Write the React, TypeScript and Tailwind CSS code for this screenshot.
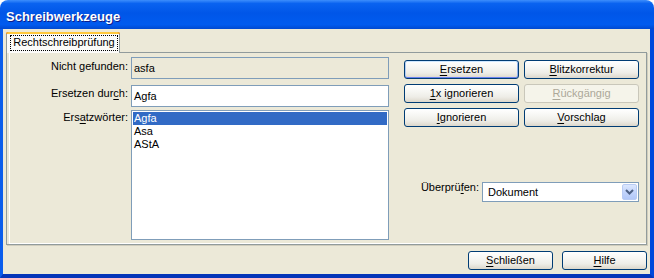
import React from "react";

const U = ({ children }: { children: React.ReactNode }) => (
  <span className="underline decoration-1 underline-offset-[2px]">{children}</span>
);

function Btn({
  children,
  w,
  def,
  disabled,
}: {
  children: React.ReactNode;
  w: string;
  def?: boolean;
  disabled?: boolean;
}) {
  const base =
    "h-[19px] flex items-center justify-center rounded-[3px] border leading-[13px] ";
  const look = disabled
    ? "border-[#C9C7BA] text-[#ACA899] bg-[#F5F4EA]"
    : "border-[#003C74] text-black bg-[linear-gradient(180deg,#FFFFFF_0%,#F7F7F4_35%,#EEEDE7_70%,#DCD7CB_100%)]";
  const d = def
    ? " shadow-[inset_0_1px_0_#CEE7FF,inset_0_-1px_0_#6982EE,inset_1px_0_0_#B4CDF3,inset_-1px_0_0_#8DAFEA]"
    : "";
  return <div className={base + look + d + " " + w}>{children}</div>;
}

export default function App() {
  return (
    <div className="w-[654px] h-[278px] bg-white font-['Liberation_Sans',Arial,sans-serif] text-[11px] leading-[13px] text-black">
      <div className="w-full h-full flex flex-col rounded-t-[8px] overflow-hidden">
        {/* Title bar */}
        <div className="h-[29px] shrink-0 pl-[6px] pt-[9px] bg-[linear-gradient(180deg,#3D8EFC_0%,#0A63F0_12%,#0056E8_45%,#005BEF_85%,#0049D0_100%)]">
          <span className="text-white font-bold text-[13px] leading-[15px] [text-shadow:1px_1px_0_#0F1E8A]">
            Schreibwerkzeuge
          </span>
        </div>

        {/* Client */}
        <div className="flex-1 flex flex-col bg-[#ECE9D8] border-l-[3px] border-r-[4px] border-b-[4px] border-l-[#0A5DEC] border-r-[#0048DB] border-b-[#0435B8] pt-[3px] px-[3px] pb-[4px]">
          {/* Tab strip */}
          <div className="h-[21px] flex relative z-10 shrink-0">
            <div className="w-[114px] h-[21px] flex flex-col">
              <div className="h-[2px] bg-[#FFC83C] rounded-t-[3px] shadow-[inset_1px_0_0_#E68B2C,inset_-1px_0_0_#E68B2C]" />
              <div className="flex-1 flex bg-[#FBFBF9] border-l border-r border-[#919B9C] pl-[3px] pr-[1px] pt-[1px] pb-[2px]">
                <div className="flex-1 border border-dotted border-black flex justify-center text-[#000]">
                  Rechtschreibprüfung
                </div>
              </div>
            </div>
          </div>

          {/* Panel */}
          <div className="flex-1 -mt-[1px] flex border border-[#919B9C] bg-[#ECE9D8] shadow-[inset_2px_0_0_#ECE9D8,inset_3px_0_0_#FFFFFF,inset_0_-1px_0_#FFFFFF,1px_1px_0_#D0CDBD]">
            {/* Left */}
            <div className="flex flex-col pt-[4px]">
              <div className="flex h-[22px]">
                <div className="w-[124px] text-right pr-[3px] pt-[3px]">Nicht gefunden:</div>
                <div className="w-[258px] h-[22px] border border-[#7F9DB9] bg-[#ECE9D8] flex items-center pl-[2px]">
                  asfa
                </div>
              </div>
              <div className="flex h-[22px] mt-[6px]">
                <div className="w-[124px] text-right pr-[3px] pt-[2px]">
                  Ersetzen dur<U>c</U>h:
                </div>
                <div className="w-[258px] h-[22px] border border-[#7F9DB9] bg-white flex items-center pl-[2px]">
                  Agfa
                </div>
              </div>
              <div className="flex mt-[3px]">
                <div className="w-[124px] text-right pr-[3px] pt-[1px]">
                  Ers<U>a</U>tzwörter:
                </div>
                <div className="w-[258px] h-[130px] border border-[#7F9DB9] bg-white p-[1px]">
                  <div className="h-[13px] bg-[#316AC5] text-white pl-[1px]">Agfa</div>
                  <div className="h-[13px] pl-[1px]">Asa</div>
                  <div className="h-[13px] pl-[1px]">AStA</div>
                </div>
              </div>
            </div>

            {/* Right */}
            <div className="flex flex-col ml-[15px] w-[235px] pt-[7px]">
              <div className="grid grid-cols-[115px_115px] gap-x-[5px] gap-y-[5px]">
                <Btn w="w-[115px]" def>
                  <span><U>E</U>rsetzen</span>
                </Btn>
                <Btn w="w-[115px]">
                  <span><U>B</U>litzkorrektur</span>
                </Btn>
                <Btn w="w-[115px]">
                  <span><U>1</U>x ignorieren</span>
                </Btn>
                <Btn w="w-[115px]" disabled>
                  <span><U>R</U>ückgängig</span>
                </Btn>
                <Btn w="w-[115px]">
                  <span><U>I</U>gnorieren</span>
                </Btn>
                <Btn w="w-[115px]">
                  <span><U>V</U>orschlag</span>
                </Btn>
              </div>

              <div className="flex justify-end items-start mt-[55px]">
                <div className="mr-[3px] -mt-[1px]">
                  Überprü<U>f</U>en:
                </div>
                <div className="w-[157px] h-[20px] border border-[#7F9DB9] bg-white flex items-center p-[1px]">
                  <div className="flex-1 pl-[4px]">Dokument</div>
                  <div className="w-[15px] h-[16px] rounded-[2px] border border-[#B9CCF4] bg-[linear-gradient(180deg,#DCE7FE_0%,#C3D5FC_50%,#B2C8F8_100%)] flex items-center justify-center">
                    <svg width="9" height="6" viewBox="0 0 9 6">
                      <path d="M1 1 L4.5 4.5 L8 1" fill="none" stroke="#4D6185" strokeWidth="2" />
                    </svg>
                  </div>
                </div>
              </div>
            </div>
          </div>

          {/* Footer */}
          <div className="flex justify-end gap-[9px] mt-[6px] shrink-0">
            <Btn w="w-[85px]">
              <span><U>S</U>chließen</span>
            </Btn>
            <Btn w="w-[85px]">
              <span><U>H</U>ilfe</span>
            </Btn>
          </div>
        </div>
      </div>
    </div>
  );
}
